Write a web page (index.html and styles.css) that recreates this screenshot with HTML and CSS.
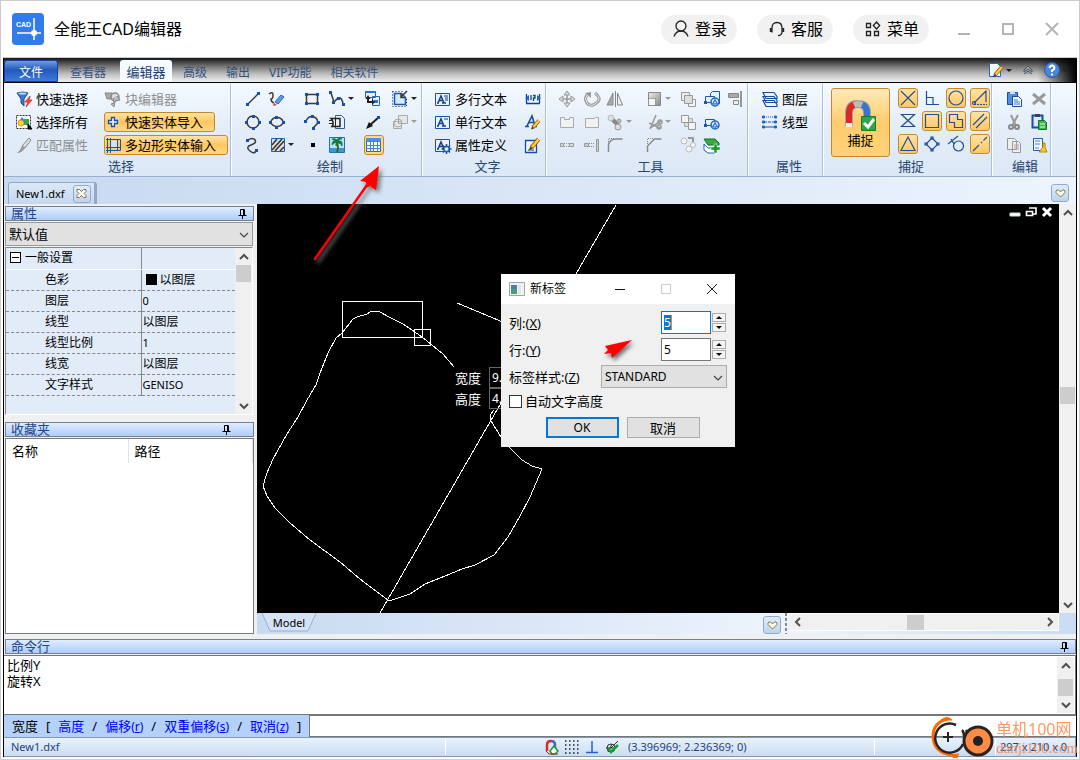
FILE: index.html
```html
<!DOCTYPE html>
<html lang="zh-CN">
<head>
<meta charset="utf-8">
<title>全能王CAD编辑器</title>
<link rel="stylesheet" href="styles.css">
</head>
<body>
<svg class="defs" width="0" height="0" aria-hidden="true">
  <defs>
    <linearGradient id="gBlue" x1="0" y1="0" x2="1" y2="1"><stop offset="0" stop-color="#6db4f4"/><stop offset="1" stop-color="#1757b0"/></linearGradient>
    <linearGradient id="gGrey" x1="0" y1="0" x2="1" y2="1"><stop offset="0" stop-color="#eee"/><stop offset="1" stop-color="#888"/></linearGradient>
    <symbol id="heart" viewBox="0 0 11 9"><path d="M5.500 8 1 3.500V2l1-1h1.500l2 2 2-2H9l1 1v1.500z" fill="#fffef0" stroke="#7c7645"/></symbol>
    <symbol id="pin" viewBox="0 0 9 10"><path d="M2.500 6V.5h4V6M.5 6.500h8M4.500 6.500V10M5.500.5V6" fill="none" stroke="#000"/></symbol>
    <symbol id="chev" viewBox="0 0 10 10"><path d="M1 7 5 3l4 4" fill="none" stroke="#505050" stroke-width="2"/></symbol>
    <symbol id="thin" viewBox="0 0 10 10"><path d="M1 3l4 4 4-4" fill="none" stroke="#444" stroke-width="1.2"/></symbol>
    <symbol id="squares" viewBox="0 0 18 18"><path d="M2.500 2.500h8v8h-8z" fill="#eee" stroke="#999"/><path d="M9.500 9.500h7v7h-7z" fill="#f4f4f4" stroke="#999"/><path d="M5.500 5.500h8v8h-8z" fill="#ddd" stroke="#999"/></symbol>
    <symbol id="squares2" viewBox="0 0 18 18"><path d="M5.500 5.500h8v8h-8z" fill="#ddd" stroke="#aaa"/><path d="M2.500 2.500h7v7h-7zM9.500 9.500h7v7h-7z" fill="#f2f2f2" stroke="#999"/></symbol>
    <symbol id="shapes" viewBox="0 0 18 18"><path d="M2.500 12.500v-6h9v6z" fill="#e6f1ff" stroke="#1a58b0"/><circle cx="12" cy="12" r="4" fill="#d8eaff" stroke="#1e66c4" stroke-width="1.500"/><path d="M12 9.500 14.500 14h-5z" fill="#a6cbf4" stroke="#1e66c4"/><path d="M1 11h3v3H1z" fill="#1a58b0"/></symbol>
    <symbol id="letter" viewBox="0 0 18 18"><path d="M1.500 3.500h14v12h-14z" fill="#e8f2ff" stroke="#1c50a4"/><path d="M4 13 7 6l3 7M5 10.500h4M3 13h2M8 13h4" fill="none" stroke="#123f91" stroke-width="1.500"/></symbol>
    <symbol id="pencil" viewBox="0 0 10 10"><path d="M2 8 8 1" stroke="#a35a00" stroke-width="3.500"/><path d="M2.500 7.500 8 1" stroke="#ffd23c" stroke-width="2"/><path d="M0 10l1-3 2 2z" fill="#333"/></symbol>
    <symbol id="help" viewBox="0 0 16 16"><circle cx="8" cy="8" r="7.500" fill="#4a86d6" stroke="#2b5aa8"/><path d="M5.500 6Q6 3.500 8 3.500T10.500 6Q10.500 7.500 8 8.500v1.500M8 11.500v2" fill="none" stroke="#fff" stroke-width="2"/></symbol>
  </defs>
</svg>
<div class="window">
  <header class="titlebar">
    <svg class="logo" viewBox="0 0 32 32"><rect width="32" height="32" rx="4" fill="#327bea"/><path d="M5 20h24M22 5v22" stroke="#fff" stroke-width="1.500"/><circle cx="22" cy="20" r="3" fill="#fff"/><text x="4" y="14" class="logo-text">CAD</text></svg>
    <h1 class="title">全能王CAD编辑器</h1>
    <div class="pills">
      <button class="pill"><svg viewBox="0 0 16 18"><circle cx="8" cy="6" r="5"/><path d="M1 16.500q2-5.500 7-5.500t7 5.500"/></svg>登录</button>
      <button class="pill"><svg viewBox="0 0 16 18"><path d="M3 12.500V8q0-5.500 5-5.500T13 8v4.500q-.5 3-4 3.200"/><path d="M1.800 8v4M14.200 8v4" stroke-width="2"/></svg>客服</button>
      <button class="pill"><svg viewBox="0 0 16 18"><path d="M1.500 3.500h4v4h-4zM1.500 11.500h4v4h-4zM9.500 11.500h4v4h-4zM11.500 2l3.200 3.500-3.200 3.500-3.200-3.500z"/></svg>菜单</button>
    </div>
    <button class="win" aria-label="最小化"><svg viewBox="0 0 16 16"><path d="M2 13h12"/></svg></button>
    <button class="win" aria-label="最大化"><svg viewBox="0 0 16 16"><path d="M3 3h10v10H3z"/></svg></button>
    <button class="win" aria-label="关闭"><svg viewBox="0 0 16 16"><path d="M2 2l12 12M14 2 2 14"/></svg></button>
  </header>

  <div class="frame">
    <nav class="tabs">
      <button class="tab file">文件</button>
      <button class="tab">查看器</button>
      <button class="tab active">编辑器</button>
      <button class="tab">高级</button>
      <button class="tab">输出</button>
      <button class="tab">VIP功能</button>
      <button class="tab">相关软件</button>
      <div class="quick">
        <button class="mini" aria-label="自定义"><svg class="i16" viewBox="0 0 16 16"><path d="M1.500 1.500h8l3 3v10h-11z" fill="#f2f8ff" stroke="#2a66bd"/><use href="#pencil" x="5" y="4" width="11" height="11"/></svg><span class="drop"></span></button>
        <button class="mini" aria-label="折叠"><svg class="i12" viewBox="0 0 12 12"><path d="M2 6l4-4 4 4v2L6 5 2 8zM2 10l4-3 4 3" fill="#9aa3ad" stroke="#4e5760"/></svg></button>
        <button class="mini" aria-label="帮助"><svg class="i16" viewBox="0 0 16 16"><use href="#help"/></svg><span class="drop"></span></button>
      </div>
    </nav>

    <div class="ribbon">
      <section class="group g-select">
        <div class="cols">
          <div class="col">
            <button class="cmd"><svg class="i" viewBox="0 0 18 18"><path d="M2 3q6-2 11 0L9 9v7l-3-3V9z" fill="#3c79c8" stroke="#1c4f94"/><ellipse cx="7.500" cy="3.500" rx="4" ry="1" fill="#c3dcfa"/><path d="M15 6l-5 6h3l-2 5 6-7h-3z" fill="#f24b3a" stroke="#c42218" stroke-width=".7"/></svg>快速选择</button>
            <button class="cmd"><svg class="i" viewBox="0 0 18 18"><path d="M1.500 2.500h14v13h-14z" fill="#fafafa" stroke="#333" stroke-dasharray="2 1"/><path d="M8 6h6v6H8z" fill="#3aa54a"/><path d="M7 4l4 6H3z" fill="#2f86d8"/><circle cx="6" cy="10" r="3" fill="#ffd33b" stroke="#b88600" stroke-width=".7"/><path d="M13 11l4 5h-4z" stroke="#000"/></svg>选择所有</button>
            <button class="cmd off"><svg class="i" viewBox="0 0 18 18"><path d="M14 2l2 2-6 8-3-2z" fill="#ddd" stroke="#888"/><path d="M7 10l3 2q-3 5-8 5 3-2 5-7z" fill="#999"/></svg>匹配属性</button>
          </div>
          <div class="col">
            <button class="cmd off"><svg class="i" viewBox="0 0 18 18"><path d="M1 3h7v6H3z" fill="#aaa" stroke="#888"/><circle cx="11" cy="7" r="4" fill="#ddd" stroke="#888" stroke-width="1.500"/><path d="M13 6l3 4-5 1-1 6-3-3 3-1-1-5" fill="#bbb" stroke="#888"/></svg>块编辑器</button>
            <button class="cmd on"><svg class="i" viewBox="0 0 18 18"><path d="M6.500 4.500h3v3h3v3h-3v3h-3v-3h-3v-3h3z" fill="#eef6ff" stroke="#1653ad" stroke-width="1.300"/></svg>快速实体导入</button>
            <button class="cmd on"><svg class="i" viewBox="0 0 18 18"><path d="M5 5h8v7H5z" fill="#cfe3fd"/><path d="M2.500 2v15M5.500 2v15M1 3.500h14.500v11H1M1 11.500h14M12.500 3v11" fill="none" stroke="#1653ad"/></svg>多边形实体输入</button>
          </div>
        </div>
        <h2>选择</h2>
      </section>

      <section class="group g-draw">
        <div class="icons">
          <button aria-label="直线"><svg class="i" viewBox="0 0 18 18"><path d="M4 14 14 4" class="k"/><path d="M2 13h3v3H2zM13 2h3v3h-3z" class="d"/></svg></button>
          <button aria-label="草图"><svg class="i" viewBox="0 0 18 18"><path d="M1 4q4-3 4 1T3 9q0 3 3 4" class="k"/><path d="M7 12l6-7 3 2-6 7z" fill="#5b9cf0" stroke="#2866b8"/><path d="M6 13l3 2-4 1z" fill="#e33"/></svg></button>
          <button aria-label="矩形"><svg class="i" viewBox="0 0 18 18"><path d="M3.500 4.500h11v9h-11z" class="k"/><path d="M2 3h3v3H2zM13 3h3v3h-3zM2 12h3v3H2zM13 12h3v3h-3z" class="d"/></svg></button>
          <button aria-label="折线"><svg class="i" viewBox="0 0 18 18"><path d="M3 3l3 9 4-4q4-1 5 6" class="k"/><path d="M1 1h3v3H1zM4 11h3v3H4zM9 7h3v3H9zM14 13h3v3h-3z" class="d"/></svg><span class="drop"></span></button>
          <button aria-label="插入块"><svg class="i" viewBox="0 0 18 18"><path d="M1.500 1.500h10v6h-10zM8.500 6.500h7v9h-7z" fill="#e8f3ff" stroke="#255fb2"/><path d="M1 1h11v2H1zM10 10h4v3h-4z" fill="#2d72d0"/><path d="M4 8v4h5" fill="none" stroke="#222" stroke-width="2"/><path d="M4 5 1.500 9h5zM8 9v6l3-3z" fill="#222"/></svg></button>
          <button aria-label="剪切框"><svg class="i" viewBox="0 0 18 18"><path d="M3.500 3.500h7l4 4v7h-11z" fill="#d7e9fd" stroke="#1a58b0" stroke-width="1.500"/><path d="M1.500 1.500h11M1.500 1.500v15M1.500 16.500h14M15.500 9v7" fill="none" stroke="#222" stroke-dasharray="1 2"/><path d="M10 7l6-6M10 3v4.500h4" class="k"/></svg><span class="drop"></span></button>
          <button aria-label="圆"><svg class="i" viewBox="0 0 18 18"><circle cx="9" cy="9" r="6" class="k"/><path d="M8 2h3v3H8zM8 14h3v3H8zM1 8h3v3H1zM14 8h3v3h-3z" class="d"/></svg></button>
          <button aria-label="椭圆"><svg class="i" viewBox="0 0 18 18"><ellipse cx="9" cy="9" rx="6" ry="4.500" class="k"/><path d="M7 3h3v3H7zM7 13h3v3H7zM1 8h3v3H1zM14 8h3v3h-3z" class="d"/></svg></button>
          <button aria-label="圆弧"><svg class="i" viewBox="0 0 18 18"><path d="M3 8q3-6 8-4t3 7l-4 4" class="k"/><path d="M1 7h3v3H1zM8 2h3v3H8zM14 8h3v3h-3zM9 14h3v3H9z" class="d"/></svg></button>
          <button aria-label="复制块"><svg class="i" viewBox="0 0 18 18"><path d="M7.500 2.500h6l3 3v10h-9z" fill="#e8f3ff" stroke="#255fb2"/><path d="M3 5.500h9v8H4q3-4-1-8z" fill="#eee" stroke="#222" stroke-width="1.500"/><path d="M1 7.500h4M1 10.500h4M7.500 5v9" stroke="#222"/></svg></button>
          <button aria-label="射线"><svg class="i" viewBox="0 0 18 18"><path d="M5 13 15 4" stroke="#222" stroke-width="2"/><path d="M2 16l3-7 4 4z" fill="#111"/><path d="M13 3h3v3h-3z" class="d"/></svg></button>
          <button aria-label="合并"><svg class="i" viewBox="0 0 18 18"><path d="M2.500 8.500h8v7h-8zM7.500 2.500h9v8h-9z" fill="#e6e6e6" stroke="#aaa"/><circle cx="7" cy="10" r="4" fill="none" stroke="#aaa"/></svg><span class="drop pale"></span></button>
          <button aria-label="样条"><svg class="i" viewBox="0 0 18 18"><path d="M4 4q5-3 7 0t-4 5-1 6 6-1" class="k"/><path d="M2 3h3v3H2zM11 13h3v3h-3z" class="d"/></svg></button>
          <button aria-label="填充"><svg class="i" viewBox="0 0 18 18"><path d="M3.500 2.500h13v13h-13z" fill="#ddd" stroke="#255fb2"/><path d="M4 9l5-6M4 14 14 3M7 15l9-10M12 15l4-4" stroke="#333" stroke-width="1.500"/></svg><span class="drop"></span></button>
          <button aria-label="点"><svg class="i" viewBox="0 0 18 18"><path d="M8 7h4v4H8z"/></svg></button>
          <button aria-label="图像"><svg class="i" viewBox="0 0 18 18"><path d="M1.500 1.500h15v15h-15z" fill="#b6e4f8" stroke="#2470b5"/><path d="M2 12h14v4H2z" fill="#359bd1"/><path d="M9 7q2 5 0 9" stroke="#4d5b22" stroke-width="2" fill="none"/><path d="M9 6Q4 3 4 9q2-3 5-2-2 2-1 3 2-2 2-3 3 0 4 3 1-6-4-5 2-3 4-2-3-3-5 1-2-2-5-1z" fill="#137a43" stroke="#137a43" stroke-width=".8"/></svg></button>
          <button class="hot" aria-label="表格"><svg class="i" viewBox="0 0 18 18"><path d="M1.500 2.500h14v13h-14z" fill="#f2f8ff" stroke="#2467bf"/><path d="M1 2h15v3H1z" fill="#4a94ea"/><path d="M1 5.500h15M1 9.500h15M1 12.500h15M5.500 3v13M8.500 3v13M12.500 3v13" stroke="#3f84d8"/></svg></button>
        </div>
        <h2>绘制</h2>
      </section>

      <section class="group g-text">
        <div class="rows">
          <button class="cmd"><svg class="i" viewBox="0 0 18 18"><use href="#letter"/><path d="M10 6h4M11 8h3M11 10h3" stroke="#123f91"/></svg>多行文本</button>
          <button aria-label="替换文字"><svg class="i" viewBox="0 0 18 18"><path d="M2.500 4v9M15.500 4v9M2 13.500h14" stroke="#123f91" stroke-width="1.300" fill="none"/><path d="M7 5v5M9 5.500h2V8H9.500v3" stroke="#123f91" stroke-width="1.300" fill="none"/><path d="M5 5 1 8l4 3zM13 5l4 3-4 3z" fill="#1e66c4"/></svg></button>
          <button class="cmd"><svg class="i" viewBox="0 0 18 18"><use href="#letter"/><path d="M10 6h4" stroke="#123f91"/></svg>单行文本</button>
          <button aria-label="文字样式"><svg class="i" viewBox="0 0 18 18"><path d="M3 13 8 3l3 10M5 9.500h5M1 13.500h4M8 13.500h5" stroke="#174da2" stroke-width="1.600" fill="none"/><use href="#pencil" x="7" y="6" width="10" height="11"/></svg></button>
          <button class="cmd"><svg class="i" viewBox="0 0 18 18"><use href="#letter"/><path d="M12.500 8v10M7.500 13h10M9 9.500l7 7M16 9.500l-7 7" stroke="#174da2" stroke-width="1.500"/><circle cx="12.500" cy="13" r="3" fill="#5a93dd" stroke="#174da2"/><circle cx="12.500" cy="13" r="1.500" fill="#fff"/></svg>属性定义</button>
          <button aria-label="编辑文字"><svg class="i" viewBox="0 0 18 18"><path d="M1.500 4.500h11v12h-11z" fill="#edf5ff" stroke="#174da2" stroke-width="1.300"/><path d="M4 14h6" stroke="#333"/><use href="#pencil" x="5" y="2" width="12" height="12"/></svg></button>
        </div>
        <h2>文字</h2>
      </section>

      <section class="group g-tools">
        <div class="icons">
          <button aria-label="移动"><svg class="i" viewBox="0 0 18 18"><path d="M9 3v12M3 9h12" stroke="#999" stroke-width="1.500"/><path d="M9 1l3 4H6zM9 17l3-4H6zM1 9l4-3v6zM17 9l-4-3v6z" fill="#ddd" stroke="#999"/></svg></button>
          <button aria-label="旋转"><svg class="i" viewBox="0 0 18 18"><path d="M4 5q-3 4 0 8t8 1 4-6-4-5" fill="none" stroke="#999" stroke-width="3"/><path d="M4 5q-3 4 0 8t8 1 4-6-4-5" fill="none" stroke="#e4e4e4"/><path d="M8 2v6L2 3z" fill="#999"/></svg></button>
          <button aria-label="镜像"><svg class="i" viewBox="0 0 18 18"><path d="M7 3v12H1z" fill="#aaa" stroke="#888"/><path d="M11.500 3v12h5z" fill="#eee" stroke="#888"/><path d="M9.500 1v16" stroke="#888"/></svg></button>
          <button aria-label="缩放"><svg class="i" viewBox="0 0 18 18"><path d="M3.500 2.500h12v13h-12z" fill="url(#gGrey)" stroke="#888"/><path d="M3.500 8.500h7v7h-7z" fill="#f5f5f5" stroke="#666" stroke-dasharray="1 1"/></svg><span class="drop pale"></span></button>
          <button aria-label="前移"><svg class="i" viewBox="0 0 18 18"><use href="#squares"/></svg></button>
          <button aria-label="组合"><svg class="i" viewBox="0 0 18 18"><path d="M7.500 8V3.500l2-2h7v12h-4" fill="#e8f3ff" stroke="#1a58b0"/><use href="#shapes"/></svg></button>
          <button aria-label="对齐"><svg class="i" viewBox="0 0 18 18"><path d="M2.500 3.500h10v4h-10z" fill="#aaa" stroke="#888"/><path d="M7.500 10.500h5v4h-5z" fill="#eee" stroke="#888"/><path d="M15 1v16" stroke="#777" stroke-width="1.500"/></svg></button>
          <button aria-label="打断"><svg class="i" viewBox="0 0 18 18"><path d="M2.500 4.500h4v2h5v-2h4v10h-13z" fill="#f1f1f1" stroke="#aaa"/></svg></button>
          <button aria-label="打断于点"><svg class="i" viewBox="0 0 18 18"><path d="M2.500 5.500h9l1-1h3v10h-13z" fill="#f1f1f1" stroke="#aaa"/></svg></button>
          <button aria-label="分解"><svg class="i" viewBox="0 0 18 18"><circle cx="5" cy="5" r="3" fill="#ddd" stroke="#bbb"/><path d="M7 7l5 5" stroke="#888" stroke-width="4"/><circle cx="13" cy="8" r="2" fill="#bbb" stroke="#999"/><circle cx="12" cy="14" r="3" fill="#ddd" stroke="#999"/></svg><span class="drop pale"></span></button>
          <button aria-label="修剪"><svg class="i" viewBox="0 0 18 18"><path d="M5 16 11 2M4 10l11 5M16 8 5 15" stroke="#999" stroke-width="1.500"/><g fill="none" stroke="#999" stroke-width="1.500"><circle cx="15" cy="9" r="2"/><circle cx="14" cy="14" r="2"/></g></svg><span class="drop pale"></span></button>
          <button aria-label="后移"><svg class="i" viewBox="0 0 18 18"><use href="#squares2"/></svg></button>
          <button aria-label="取消组合"><svg class="i" viewBox="0 0 18 18"><use href="#shapes"/></svg></button><span></span>
          <button aria-label="拉伸"><svg class="i" viewBox="0 0 18 18"><path d="M2.500 7.500h3v3h-3zM11.500 7.500h4v3h-4z" fill="#ddd" stroke="#999"/><path d="M6 7.500h5M6 10.500h5" stroke="#999" stroke-dasharray="1 1"/></svg></button>
          <button aria-label="延伸"><svg class="i" viewBox="0 0 18 18"><path d="M1.500 7.500h4v3h-4z" fill="#ccc" stroke="#999"/><path d="M6 7.500h6M6 10.500h6" stroke="#888" stroke-dasharray="1 1"/><path d="M13.500 3.500h2v12h-2z" fill="#ccc" stroke="#999"/></svg></button>
          <button aria-label="圆角"><svg class="i" viewBox="0 0 18 18"><path d="M2.500 16V9q1-6 8-6h6" fill="none" stroke="#888" stroke-width="1.500"/><path d="M2.500 8V2.500H9" fill="none" stroke="#888" stroke-dasharray="1 1"/></svg></button>
          <button aria-label="倒角"><svg class="i" viewBox="0 0 18 18"><path d="M2.500 16v-6l7-7h7" fill="none" stroke="#888" stroke-width="1.500"/><path d="M2.500 8V2.500H9" fill="none" stroke="#888" stroke-dasharray="1 1"/></svg></button>
          <button aria-label="阵列"><svg class="i" viewBox="0 0 18 18"><path d="M9 2h5v4" fill="none" stroke="#999" stroke-width="2"/><g fill="#f6f6f6" stroke="#bbb"><circle cx="5" cy="5" r="3"/><circle cx="14" cy="9" r="2.500"/><circle cx="10" cy="13" r="3"/></g></svg></button>
          <button aria-label="添加图层"><svg class="i" viewBox="0 0 18 18"><path d="M1 8v6l4 3h7M1 8l4 4h6" fill="#fff" stroke="#2465b8"/><path d="M1 3h11l4 4v2H5z" fill="#36aa45" stroke="#147129"/><path d="M11 8h3v3h3v3h-3v3h-3v-3H8v-3h3z" fill="#169b27" stroke="#fff" stroke-width=".5"/></svg></button>
        </div>
        <h2>工具</h2>
      </section>

      <section class="group g-prop">
        <div class="col">
          <button class="cmd"><svg class="i" viewBox="0 0 18 18"><path d="M2 10.500h11l3 4v2H5zM2 6.500h11l3 4v2H5zM2 2.500h11l3 4v2H5z" fill="#e9f4ff" stroke="#154e9f" stroke-width="1.200"/></svg>图层</button>
          <button class="cmd"><svg class="i" viewBox="0 0 18 18"><path d="M3 4h12" stroke="#1653ad" stroke-dasharray="1 1"/><path d="M3 9h12" stroke="#1653ad" stroke-dasharray="3 1"/><path d="M3 14h12" stroke="#1653ad"/><path d="M1.500 3h2v2h-2zM1.500 8h2v2h-2zM1.500 13h2v2h-2zM13.500 3h2v2h-2zM13.500 8h2v2h-2zM13.500 13h2v2h-2z" fill="#1e66c4" stroke="#1e66c4"/></svg>线型</button>
        </div>
        <h2>属性</h2>
      </section>

      <section class="group g-snap">
        <div class="snap">
          <button class="big"><svg viewBox="0 0 34 34"><path d="M5 28V15q0-9 9-9t9 9v6" fill="none" stroke="#a3a3a3" stroke-width="8"/><path d="M5 28V15q0-9 9-9" fill="none" stroke="#d82828" stroke-width="6"/><path d="M14 6q9 0 9 9v6" fill="none" stroke="#3975c9" stroke-width="6"/><path d="M10 7q4-2 8 0" fill="none" stroke="#bbb" stroke-width="6"/><path d="M2 25h6v4H2z" fill="#eee"/><path d="M17.500 18.500h14v14h-14z" fill="#2fa646" stroke="#187b2a"/><path d="M20 25l4 4 6-8" fill="none" stroke="#fff" stroke-width="3"/></svg>捕捉</button>
          <div class="snaps">
            <button class="on" aria-label="交点"><svg class="i" viewBox="0 0 18 18"><path d="M2 2l14 14M16 2 2 16"/></svg></button>
            <button aria-label="垂足"><svg class="i" viewBox="0 0 18 18"><path d="M3.500 2v13.500H16M4 8.500h6v7"/></svg></button>
            <button class="on" aria-label="圆心"><svg class="i" viewBox="0 0 18 18"><circle cx="9" cy="9" r="7"/></svg></button>
            <button class="on" aria-label="角度"><svg class="i" viewBox="0 0 18 18"><path d="M3 14 15 2v11"/><path d="M3 15.500h13" stroke-dasharray="2 1"/><circle cx="3" cy="14" r="1.500"/></svg></button>
            <button aria-label="最近点"><svg class="i" viewBox="0 0 18 18"><path d="M2.500 2.500h13l-13 12h13z"/></svg></button>
            <button class="on" aria-label="端点"><svg class="i" viewBox="0 0 18 18"><path d="M2.500 2.500h13v13h-13z"/></svg></button>
            <button class="on" aria-label="插入点"><svg class="i" viewBox="0 0 18 18"><path d="M2.500 2.500h8v5h5v8h-8v-5h-5z"/></svg></button>
            <button class="on" aria-label="平行"><svg class="i" viewBox="0 0 18 18"><path d="M2 13 13 2M5 16 16 5"/></svg></button>
            <button class="on" aria-label="中点"><svg class="i" viewBox="0 0 18 18"><path d="M9 2 2 15.500h14z"/></svg></button>
            <button aria-label="象限点"><svg class="i" viewBox="0 0 18 18"><path d="M9 3l6 6-6 6-6-6z"/><path d="M8 2h2v2H8zM8 14h2v2H8zM2 8h2v2H2zM14 8h2v2h-2z"/></svg></button>
            <button aria-label="切点"><svg class="i" viewBox="0 0 18 18"><circle cx="11.500" cy="11" r="5"/><path d="M1 9 11 1M4 4l3 5"/></svg></button>
            <button class="on" aria-label="延长线"><svg class="i" viewBox="0 0 18 18"><path d="M2 16 8 10M10 8l1-1M12.500 5.500 16 2"/></svg></button>
          </div>
        </div>
        <h2>捕捉</h2>
      </section>

      <section class="group g-edit">
        <div class="icons">
          <button aria-label="粘贴"><svg class="i" viewBox="0 0 18 18"><path d="M1.500 2.500h10v12h-10z" fill="#4a91e4" stroke="#174da2"/><path d="M4 1h5v3H4z" fill="#ddd"/><path d="M6.500 6.500h6l3 3v7h-9z" fill="#f2f8ff" stroke="#174da2"/><path d="M8 10h4M8 12h6M8 14h6" stroke="#3977c3"/></svg></button>
          <button aria-label="删除"><svg class="i" viewBox="0 0 18 18"><path d="M3 4l12 10M15 4 3 14" stroke="#999" stroke-width="3"/></svg></button>
          <button aria-label="剪切"><svg class="i" viewBox="0 0 18 18"><path d="M5 2l5 11M12 2 6 13" stroke="#999" stroke-width="2"/><g fill="none" stroke="#888" stroke-width="2"><circle cx="5" cy="14" r="2"/><circle cx="11" cy="14" r="2"/></g></svg></button>
          <button aria-label="粘贴为块"><svg class="i" viewBox="0 0 18 18"><path d="M2.500 2.500h10v12h-10z" fill="#d9eaff" stroke="#174da2" stroke-width="2"/><path d="M5 1h5v3H5z" fill="#345"/><path d="M8.500 7.500h6l2 2v7h-8z" fill="#36b94a" stroke="#127122"/><path d="M10 11h5M10 14h5" stroke="#dfd"/></svg></button>
          <button aria-label="复制"><svg class="i" viewBox="0 0 18 18"><path d="M1.500 2.500h7l2 2v9h-9zM6.500 5.500h6l2 2v9h-8z" fill="#eee" stroke="#999"/><path d="M8 9h5M8 11h5M8 13h5" stroke="#aaa"/></svg></button>
          <button aria-label="清理"><svg class="i" viewBox="0 0 18 18"><path d="M3.500 2.500h9v12h-9z" fill="#edf5ff" stroke="#255fb2"/><path d="M5 5h5M5 8h5M5 12h4" stroke="#498ad8"/><path d="M13 7h2v4l2 5H9l4-5z" fill="#ffc928" stroke="#b88700"/></svg></button>
        </div>
        <h2>编辑</h2>
      </section>
    </div>

    <div class="docs">
      <div class="doc">New1.dxf<button class="tiny" aria-label="关闭标签"><svg viewBox="0 0 11 9"><path d="M1 .5h2.500l2 2 2-2H10v2l-2 2 2 2v2H7.500l-2-2-2 2H1v-2l2-2-2-2z" fill="#fffef0" stroke="#7c7645"/></svg></button></div>
      <button class="tiny" aria-label="标签列表"><svg viewBox="0 0 11 9"><use href="#heart"/></svg></button>
    </div>

    <div class="main">
      <aside class="side">
        <div class="head">属性<svg viewBox="0 0 9 10"><use href="#pin"/></svg></div>
        <div class="combo"><select aria-label="属性预设"><option>默认值</option></select><svg viewBox="0 0 10 10"><use href="#thin"/></svg></div>
        <div class="props">
          <table>
            <tr class="cat"><th><i class="minus"></i>一般设置</th><td></td></tr>
            <tr><th>色彩</th><td><i class="swatch"></i>以图层</td></tr>
            <tr><th>图层</th><td class="lat">0</td></tr>
            <tr><th>线型</th><td>以图层</td></tr>
            <tr><th>线型比例</th><td class="lat">1</td></tr>
            <tr><th>线宽</th><td>以图层</td></tr>
            <tr><th>文字样式</th><td class="lat">GENISO</td></tr>
          </table>
          <div class="scroll"><button aria-label="向上"><svg viewBox="0 0 10 10"><use href="#chev"/></svg></button><span class="thumb"></span><span class="fill"></span><button class="down" aria-label="向下"><svg viewBox="0 0 10 10"><use href="#chev"/></svg></button></div>
        </div>
        <div class="head fav">收藏夹<svg viewBox="0 0 9 10"><use href="#pin"/></svg></div>
        <div class="list"><table><tr><th>名称</th><th>路径</th></tr></table></div>
      </aside>

      <div class="work">
        <div class="view">
          <div class="canvas">
            <svg class="drawing" aria-label="图纸">
              <g transform="translate(-257 -204)" fill="none" stroke="#fff" shape-rendering="crispEdges">
                <path d="M342.500 301.500h80v36h-80zM414.500 329.500h16v16h-16z"/>
                <path d="M454 367l-11-13-11-9-10-8-10-7-9-6-12-6-13-7h-6l-5 3-10 3-4 2-11 14-6 5-8 15-8 20-4 12-9 15-9 17-11 17-14 25-6 14-4 13 4 10 8 12 15 15 20 17 30 22 20 17 16 12 13 10 21-7 15-10 25-10 12-5 13-4 19-10 14-18 12-21 10-19 6-14 6-14-10-3-10-6-12-12-9-11-10-16-1-6 4-5"/>
                <path d="M616 205 494 415 380 613M457 303l60 25"/>
              </g>
            </svg>
            <div class="mdi">
              <svg viewBox="0 0 44 12"><path d="M1 7h10v3H1z" fill="#fff" stroke="#cdd"/><path d="M20 2h7v6h-3M17.500 5.500h6v4h-6z" fill="none" stroke="#fff" stroke-width="1.600"/><path d="M34 2l8 8M42 2l-8 8" stroke="#fff" stroke-width="3"/></svg>
            </div>
            <div class="dyn"><span>宽度</span><b>9.</b><span>高度</span><b>4.</b></div>
            <form class="dialog" onsubmit="return false">
              <div class="dtitle"><svg class="i16" viewBox="0 0 16 14"><path d="M.5.5h15v13H.5z" fill="#f3f3f3" stroke="#98a4ae"/><path d="M2 3h6v9H2z" fill="#4a7fb0"/><path d="M2 7h6v5H2z" fill="#4a9b78"/><path d="M9 3h3v9H9z" fill="#dde5ec"/></svg>新标签
                <div class="dwin"><button type="button" aria-label="最小化"><svg viewBox="0 0 12 12"><path d="M1 6.500h10"/></svg></button><button type="button" class="dim" aria-label="最大化" disabled><svg viewBox="0 0 12 12"><path d="M1.500 1.500h9v9h-9z"/></svg></button><button type="button" aria-label="关闭"><svg viewBox="0 0 12 12"><path d="M1 1l10 10M11 1 1 11"/></svg></button></div>
              </div>
              <div class="dbody">
                <div class="drow"><label for="cols">列:(<u>X</u>)</label><span class="box focus"><input id="cols" value="5"></span><span class="spin"><button type="button" aria-label="增加列"></button><button type="button" class="dn" aria-label="减少列"></button></span></div>
                <div class="drow"><label for="rws">行:(<u>Y</u>)</label><span class="box"><input id="rws" value="5"></span><span class="spin"><button type="button" aria-label="增加行"></button><button type="button" class="dn" aria-label="减少行"></button></span></div>
                <div class="drow"><label for="sty">标签样式:(<u>Z</u>)</label><span class="combo std"><select id="sty"><option>STANDARD</option></select><svg viewBox="0 0 10 10"><use href="#thin"/></svg></span></div>
                <label class="check"><input type="checkbox">自动文字高度</label>
                <div class="dbtns"><button class="ok">OK</button><button type="button">取消</button></div>
              </div>
              <svg class="cue" viewBox="0 0 34 22"><path d="M29 1 9 19l-1-5-7 1 4-4-3-4z" fill="#f00"/></svg>
            </form>
          </div>
          <div class="scroll tall"><button aria-label="向上"><svg viewBox="0 0 10 10"><use href="#chev"/></svg></button><span class="fill before"></span><span class="thumb"></span><span class="fill after"></span><button class="down" aria-label="向下"><svg viewBox="0 0 10 10"><use href="#chev"/></svg></button></div>
        </div>
        <div class="sheets">
          <button class="sheet"><svg viewBox="0 0 56 20"><path d="M1 0l8 18h38l8-18" fill="#d3e2f5" stroke="#9bb0cd"/></svg><span>Model</span></button>
          <button class="tiny" aria-label="布局列表"><svg viewBox="0 0 11 9"><use href="#heart"/></svg></button>
          <i class="grip"></i>
          <div class="hscroll"><button class="left" aria-label="向左"><svg viewBox="0 0 10 10"><use href="#chev"/></svg></button><span class="fill before"></span><span class="thumb"></span><span class="fill after"></span><button class="right" aria-label="向右"><svg viewBox="0 0 10 10"><use href="#chev"/></svg></button></div>
        </div>
      </div>
    </div>

    <section class="console">
      <div class="head">命令行<svg viewBox="0 0 9 10"><use href="#pin"/></svg></div>
      <div class="log"><div class="lines"><p>比例Y</p><p>旋转X</p></div><div class="scroll"><button aria-label="向上"><svg viewBox="0 0 10 10"><use href="#chev"/></svg></button><span class="fill"></span><span class="thumb"></span><button class="down" aria-label="向下"><svg viewBox="0 0 10 10"><use href="#chev"/></svg></button></div></div>
      <div class="prompt"><label for="cmdline">宽度</label><span>[</span><a href="#">高度</a><span>/</span><a href="#">偏移<small>(<u>r</u>)</small></a><span>/</span><a href="#">双重偏移<small>(<u>s</u>)</small></a><span>/</span><a href="#">取消<small>(<u>z</u>)</small></a><span>]</span><input id="cmdline"></div>
    </section>

    <footer class="status">
      <span class="s-name">New1.dxf</span>
      <span class="s-mid">
        <svg class="i16" viewBox="0 0 16 16"><path d="M3 12V6q0-4 4-4" fill="none" stroke="#d82828" stroke-width="2.500"/><path d="M7 2q4 0 4 4v5" fill="none" stroke="#3d6db8" stroke-width="2.500"/><path d="M6 12l4-5 4 5-3 3H8z" fill="#fff" stroke="#179b30" stroke-width="1.500"/><path d="M2 12l3 3h9" fill="none" stroke="#a22" /></svg>
        <svg class="i16" viewBox="0 0 16 16"><path d="M1 2h14M1 6h14M1 10h14M1 14h14" stroke="#222" stroke-width="1.500" stroke-dasharray="1.500 2.500"/></svg>
        <svg class="i16" viewBox="0 0 16 16"><path d="M8 2v11M2 13.500h12" stroke="#1e66c4" stroke-width="1.500"/></svg>
        <svg class="i16" viewBox="0 0 16 16"><circle cx="7" cy="9" r="4" fill="none" stroke="#333"/><path d="M7 9 14 2M2 9h9M4 13l4-8" stroke="#333"/><path d="M4 9l3 4 7-7" fill="none" stroke="#18a132" stroke-width="2.500"/></svg>
        <span>(3.396969; 2.236369; 0)</span>
      </span>
      <span class="s-gap"></span>
      <span class="s-size">297 x 210 x 0</span>
    </footer>
  </div>

  <svg class="pointer" viewBox="0 0 74 100"><path d="M5 96 57 22" stroke="#f00" stroke-width="2.500" stroke-linecap="round"/><path d="M69 3l-3 24-6-4-4 2v-6l-6-1z" fill="#f00"/></svg>

  <div class="mark">
    <svg viewBox="0 0 66 42"><path d="M18 2Q3 5 3 20q1 16 19 18l6 2" fill="none" stroke="#ff6a00" stroke-width="3"/><path d="M11 3q6-5 11 0zM20 38l9-1-5 4z" fill="#ff6a00" stroke="#ff6a00"/><path d="M26 8A14.500 14.500 0 1 0 33 27M32 13q2 2 2 6" fill="none" stroke="#2b2322" stroke-width="2.500"/><path d="M18 15v10M13 20h10" stroke="#2b2322" stroke-width="2"/><path d="M36 13l4 6" stroke="#2b2322" stroke-width="2.500"/><circle cx="48" cy="24" r="14" fill="#ff8c42" stroke="#2b2322" stroke-width="3"/><circle cx="48" cy="24" r="5" fill="#222"/></svg>
    <p><strong>单机100网</strong><span>danji100.com</span></p>
  </div>
</div>
</body>
</html>
```
FILE: styles.css
```css
* { box-sizing: border-box; }
body { margin: 0; font: 12px/16px "Noto Sans", "Noto Sans CJK SC", sans-serif; color: #000; }
button, input, select { font: inherit; color: inherit; margin: 0; padding: 0; border: 0; background: none; border-radius: 0; }
button { display: flex; align-items: center; justify-content: center; }
h1, h2, p { margin: 0; font-weight: normal; }
svg { display: block; flex: none; }
.defs { position: absolute; }
.i { width: 18px; height: 18px; }
.i16 { width: 16px; height: 16px; }
.i12 { width: 12px; height: 12px; }
.k { fill: none; stroke: #3a3a3a; stroke-width: 1.5; }
.d { fill: #1450b4; }
.drop { border: 3px solid transparent; border-top-color: #222; border-bottom: 0; margin-left: 2px; flex: none; }
.drop.pale { border-top-color: #999; }

.window { position: relative; display: flex; flex-direction: column; height: 100vh; min-height: 600px; border: 1px solid #ccc; padding: 0 2px 2px; background: #fff; overflow: hidden; }
.titlebar { display: flex; align-items: center; flex: none; height: 57px; padding: 0 3px 0 9px; border-bottom: 1px solid #ccc; }
.logo { width: 32px; height: 32px; }
.logo-text { font: bold 7px "Liberation Sans", sans-serif; fill: #fff; }
.title { font-size: 16px; line-height: 24px; margin-left: 10px; }
.pills { display: flex; gap: 20px; margin-left: auto; margin-right: 13px; }
.pill { width: 76px; height: 29px; gap: 6px; padding-left: 2px; border-radius: 15px; background: #f1f1f1; font-size: 16px; line-height: 24px; }
.pill svg { width: 16px; height: 18px; fill: none; stroke: #222; stroke-width: 1.3; }
.win { width: 44px; height: 40px; }
.win svg { width: 16px; height: 16px; fill: none; stroke: #b4b4b4; stroke-width: 2; }

.frame { display: flex; flex-direction: column; flex: 1; min-height: 0; border: solid #000; border-width: 0 1px; background: #f0f0f0; }
.tabs { display: flex; align-items: flex-end; flex: none; height: 25px; border-bottom: 1px solid #000; background: linear-gradient(#151515, #777 36%, #bbb 65%, #f0f0f0); }
.tab { height: 22px; padding: 3px 9px 0; color: #33507c; }
.tab + .tab { margin-left: 1px; }
.tab.file { width: 54px; margin-right: 2px; color: #fff; border: 1px solid #1643a0; border-radius: 3px 3px 0 0; background: linear-gradient(#6d9be6, #2459bb 45%, #3d7bdc); }
.tab.active { width: 52px; margin: 0 1px 0 5px; padding: 1px 0 0; font-size: 13px; color: #1d3f74; border-radius: 3px 3px 0 0; background: #f5faff; }
.quick { display: flex; align-items: center; height: 24px; gap: 10px; padding: 0 8px 0 40px; margin-left: auto; background: linear-gradient(90deg, transparent 70%, #000); }
.mini { height: 24px; }

.ribbon { display: flex; flex: none; height: 94px; border-bottom: 1px solid #98afd0; background: linear-gradient(#f4f9ff, #e3edf8 50%, #dce8f6); }
.group { display: flex; flex-direction: column; justify-content: space-between; flex: none; padding: 4px 0 2px; border-right: 1px solid #aabfd9; box-shadow: 1px 0 #fff; }
.group h2 { padding-left: 8px; font-size: 13px; line-height: 16px; text-align: center; color: #28466f; }
.cols { display: flex; gap: 16px; padding-left: 11px; }
.col { display: grid; grid-auto-rows: 23px; align-items: center; justify-items: start; }
.cmd { gap: 3px; height: 20px; font-size: 13px; line-height: 18px; white-space: nowrap; }
.off { color: #8f8f8f; }
.cmd.on { gap: 2px; border: 1px solid #c48a29; border-radius: 3px; padding-right: 11px; background: linear-gradient(#ffe3a4, #ffc75f 50%, #ffd887); }
.g-select { width: 227px; }
.g-draw { width: 191px; }
.g-text { width: 124px; }
.g-tools { width: 202px; }
.g-prop { width: 75px; }
.g-prop .col { padding-left: 13px; }
.g-snap { width: 169px; }
.g-edit { width: 59px; }
.icons { display: grid; grid-auto-rows: 23px; align-items: center; justify-items: start; }
.g-draw .icons { grid-template-columns: 24px 35px 25px 36px 27px 29px; padding-left: 13px; }
.g-draw .hot { width: 20px; height: 20px; border: 1px solid #c48a29; border-radius: 3px; background: #ffd887; }
.rows { display: grid; grid-template-columns: 90px 18px; grid-auto-rows: 23px; align-items: center; justify-items: start; padding-left: 12px; }
.g-tools .icons { grid-template-columns: 25px 23px 39px 34px 24px 23px 20px; padding-left: 12px; }
.g-edit .icons { grid-template-columns: 24px 18px; padding-left: 14px; }
.snap { display: flex; gap: 8px; padding: 1px 0 0 8px; }
.big { flex-direction: column; width: 59px; height: 69px; font-size: 13px; border: 1px solid #c48a29; border-radius: 3px; background: linear-gradient(#ffeab9, #ffcc6c 50%, #ffd27a); }
.big svg { width: 34px; height: 34px; }
.snaps { display: grid; grid-template-columns: repeat(4, 20px); grid-auto-rows: 20px; gap: 3px 4px; }
.snaps .on { border: 1px solid #c48a29; border-radius: 3px; background: linear-gradient(#ffe3a4, #ffc864); }
.snaps svg { fill: none; stroke: #234f92; stroke-width: 1.2; }

.docs { display: flex; align-items: flex-end; justify-content: space-between; flex: none; height: 27px; padding: 0 7px 0 4px; background: linear-gradient(90deg, #c6d9f0, #edf4fd); }
.doc { display: flex; align-items: center; gap: 8px; height: 22px; padding: 0 3px 0 7px; font-size: 11px; border: 1px solid #93a9c8; border-right-width: 3px; border-bottom: 0; border-radius: 3px 3px 0 0; background: linear-gradient(#dce8f7, #c5d7ef); }
.tiny { width: 18px; height: 18px; border: 1px solid #91abd0; border-radius: 3px; background: linear-gradient(#e2edf9, #bfd3ec); }
.tiny svg { width: 11px; height: 9px; }
.docs > .tiny { margin-bottom: 2px; }

.main { display: flex; flex: 1; min-height: 0; }
.side { display: flex; flex-direction: column; flex: none; width: 253px; padding: 2px 3px 1px 1px; }
.head { display: flex; align-items: center; justify-content: space-between; flex: none; height: 15px; padding: 0 6px 0 5px; font-size: 13px; line-height: 13px; color: #1f4591; border: 1px solid #76808e; background: linear-gradient(#e0edff, #adcdf8); }
.head svg { width: 9px; height: 10px; }
.combo { display: flex; position: relative; flex: none; height: 24px; margin: 1px 1px 0 0; border: 1px solid #9a9a9a; background: #e1e1e1; }
.combo select { appearance: none; width: 100%; padding-left: 3px; font-size: 13px; }
.combo svg { position: absolute; right: 3px; top: 7px; width: 10px; height: 10px; pointer-events: none; }
.props { display: flex; flex: none; height: 168px; margin: 1px 1px 0 0; border: 1px solid #888; border-right-color: #fff; border-bottom-color: #fff; background: #e2ecf9; }
.props table { flex: 1; align-self: flex-start; border-collapse: collapse; }
.props th, .props td { height: 21px; padding: 0; font-weight: normal; text-align: left; border-bottom: 1px dashed #888; }
.props th { width: 135px; padding-left: 39px; border-right: 1px solid #888; }
.props td { padding-left: 1px; }
.props .lat { font-size: 11px; }
.props .cat th, .props .cat td { height: 21px; border-bottom: 1px solid #fff; }
.props .cat th { padding-left: 4px; }
.minus { display: inline-block; width: 11px; height: 11px; margin-right: 4px; vertical-align: -1px; border: 1px solid #000; background: linear-gradient(#000, #000) center / 7px 1px no-repeat #fff; }
.swatch { display: inline-block; width: 11px; height: 11px; margin: 0 3px; vertical-align: -1px; background: #000; }
.scroll { display: flex; flex-direction: column; flex: none; width: 17px; background: #f0f0f0; }
.scroll button { flex: none; height: 17px; }
.scroll svg, .hscroll svg { width: 10px; height: 10px; }
.down svg { transform: rotate(180deg); }
.left svg { transform: rotate(-90deg); }
.right svg { transform: rotate(90deg); }
.thumb { flex: none; width: 15px; height: 17px; margin: 0 auto; background: #cdcdcd; }
.fill { flex: 1; }
.fav { margin-top: 7px; padding-right: 22px; }
.list { flex: 1; margin-top: 1px; border: 1px solid #7b7b7b; background: #fff; }
.list table { width: 100%; border-collapse: collapse; font-size: 13px; }
.list th { height: 24px; padding: 0 6px; font-weight: normal; text-align: left; border-right: 1px solid #e3e3e3; }
.list th:first-child { width: 122px; }

.work { display: flex; flex-direction: column; flex: 1; min-width: 0; }
.view { display: flex; flex: 1; min-height: 0; }
.canvas { position: relative; flex: 1; overflow: hidden; background: #000; }
.drawing { position: absolute; inset: 0; width: 100%; height: 100%; }
.mdi { position: absolute; right: 6px; top: 2px; width: 44px; }
.dyn { position: absolute; left: 198px; top: 163px; display: grid; grid-template-columns: 34px 60px; grid-auto-rows: 21px; align-items: center; font-size: 13px; color: #fff; }
.dyn b { height: 21px; padding-left: 2px; font-weight: normal; line-height: 19px; font-size: 12px; border: 1px solid #666; }
.tall .thumb { margin: 0 1px 0 auto; }
.before { flex: 13; }
.after { flex: 15; }
.sheets { display: flex; flex: none; height: 21px; margin-bottom: 1px; background: linear-gradient(90deg, #c8daf1, #edf4fd 65%, #c9dcf3); }
.sheet { position: relative; width: 56px; height: 20px; margin-left: 4px; font-size: 11px; }
.sheet svg { position: absolute; inset: 0; width: 56px; height: 20px; }
.sheet span { position: relative; line-height: 16px; }
.sheets > .tiny { margin: 3px 4px 0 auto; }
.grip { width: 2px; margin-right: 2px; background: repeating-linear-gradient(#888 0 3px, transparent 3px 5px); }
.hscroll { display: flex; align-items: center; width: 270px; height: 18px; margin-right: 17px; border: solid #fff; border-width: 1px 1px 1px 0; background: #f0f0f0; }
.hscroll button { width: 17px; height: 17px; }
.hscroll .thumb { width: 17px; height: 15px; margin: 0; }

.dialog { position: absolute; left: 244px; top: 70px; width: 234px; margin: 0; background: #f0f0f0; }
.dtitle { display: flex; align-items: center; gap: 5px; height: 30px; padding-left: 8px; background: #fff; }
.dwin { display: flex; margin-left: auto; }
.dwin button { width: 46px; height: 29px; }
.dwin svg { width: 12px; height: 12px; fill: none; stroke: #111; }
.dwin .dim svg { stroke: #ccc; }
.dbody { padding: 5px 8px 9px; font-size: 13px; }
.drow { display: flex; align-items: center; height: 27px; }
.drow label { margin-right: auto; line-height: 18px; }
.box { display: flex; width: 50px; height: 23px; padding: 3px 2px; border: 1px solid #777; background: #fff; }
.box input { width: 100%; outline: 0; font-size: 12px; background: none; }
.box.focus { border-color: #0078d7; }
.focus input { width: 7px; color: #fff; background: #0078d7; box-shadow: 1px 0 #f58220; }
.spin { display: grid; gap: 1px; width: 15px; margin: 0 0 0 1px; }
.spin button { width: 14px; height: 9px; border: 1px solid #adadad; background: #f4f4f4; }
.spin button::after { content: ""; border: 3px solid transparent; border-top-width: 0; border-bottom-color: #000; }
.spin .dn::after { border-width: 3px 3px 0; border-top-color: #000; }
.combo.std { width: 126px; height: 23px; margin: 0; border-color: #adadad; }
.combo.std select { font-size: 12px; }
.check { display: flex; align-items: center; height: 22px; gap: 3px; }
.check input { appearance: none; width: 13px; height: 13px; margin: 0; border: 1px solid #333; background: #fff; }
.dbtns { display: flex; justify-content: center; gap: 8px; padding: 5px 0 0 10px; margin-right: 1px; }
.dbtns button { width: 73px; height: 21px; border: 1px solid #adadad; background: #e1e1e1; }
.dbtns .ok { font-size: 12px; border: 2px solid #0078d7; }
.cue { position: absolute; left: 102px; top: 65px; width: 34px; height: 22px; pointer-events: none; filter: drop-shadow(2px 3px 2px #666); }

.console { flex: none; padding: 4px 0 0; }
.console .head { margin-left: 1px; }
.log { display: flex; justify-content: space-between; height: 60px; margin-top: 1px; padding: 1px 1px 1px 0; font-size: 13px; border: 1px solid #777; border-left: 0; background: #fff; }
.lines { padding: 0 3px; line-height: 16px; }
.prompt { display: flex; align-items: center; height: 22px; gap: 8px; padding-left: 8px; font-size: 13px; background: #b3d1fb; }
.prompt a { color: #00f; text-decoration: none; }
.prompt small { font-size: 12px; }
.prompt input { flex: 1; height: 22px; padding: 0 4px; border: 1px solid #777; border-width: 1px 0 1px 1px; background: #fff; }
.status { display: flex; align-items: center; flex: none; height: 20px; font-size: 11px; color: #24437e; border: 1px solid #8198b8; border-left: 0; background: linear-gradient(#e9f2fc, #cadcf2); }
.s-name { width: 441px; padding-left: 7px; }
.s-mid { display: flex; align-items: center; gap: 4px; flex: 1; padding-left: 98px; border-left: 1px solid #fff; }
.s-mid span { margin-left: 4px; }
.s-gap { width: 121px; height: 16px; border-left: 1px solid #fff; }
.s-size { width: 80px; padding-left: 4px; border-left: 1px solid #fff; white-space: nowrap; }

.pointer { position: absolute; left: 309px; top: 162px; width: 74px; height: 100px; pointer-events: none; filter: drop-shadow(3px 3px 2px #777); }
.mark { position: absolute; right: 0; bottom: 0; display: flex; align-items: center; width: 149px; height: 42px; pointer-events: none; color: #ff7f3a; }
.mark svg { width: 66px; height: 42px; }
.mark p { display: flex; flex-direction: column; opacity: .8; }
.mark strong { font-size: 16px; line-height: 20px; font-weight: normal; white-space: nowrap; }
.mark span { font: 15px/18px "Liberation Serif", serif; }
```
